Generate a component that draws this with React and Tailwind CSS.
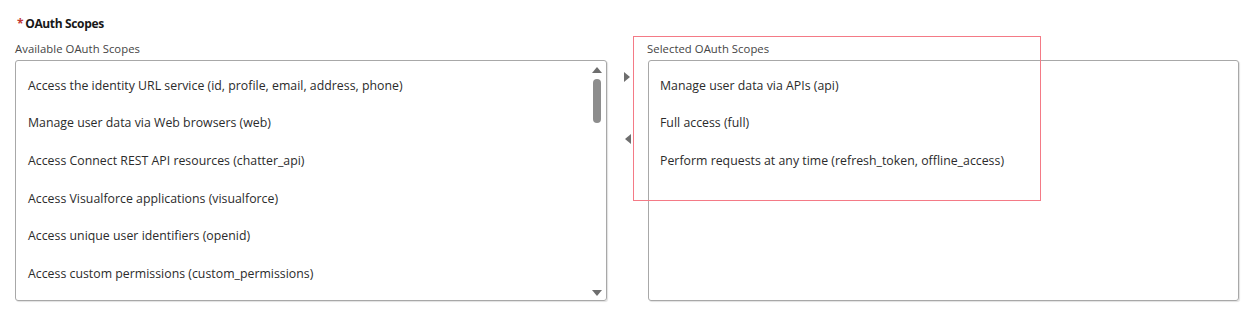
const available = [
  'Access the identity URL service (id, profile, email, address, phone)',
  'Manage user data via Web browsers (web)',
  'Access Connect REST API resources (chatter_api)',
  'Access Visualforce applications (visualforce)',
  'Access unique user identifiers (openid)',
  'Access custom permissions (custom_permissions)',
];

const selected = [
  'Manage user data via APIs (api)',
  'Full access (full)',
  'Perform requests at any time (refresh_token, offline_access)',
];

const font = { fontFamily: '"Open Sans", "Noto Sans", sans-serif' };

function Item({ text }) {
  return <div className="h-[37.7px] flex items-center text-[12.3px] text-[#2b2b2b] tracking-[0.02px]">{text}</div>;
}

export default function App() {
  return (
    <div className="relative w-[1242px] h-[312px] bg-white overflow-hidden" style={font}>
      <div className="pl-[15px] pt-[15px]">
        <div className="h-[18px] flex items-center text-[12px] font-bold text-[#181818] tracking-[-0.35px]">
          <span className="text-[#c23934] mr-[2px] ml-[2px]">*</span>OAuth Scopes
        </div>
        <div className="flex mt-[8px]">
          <div className="w-[592px]">
            <div className="h-[16px] text-[11.3px] text-[#444] tracking-[0.05px] leading-[16px]">Available OAuth Scopes</div>
            <div className="mt-[3px] h-[241px] border border-[#a8a8a8] rounded-[3px] shadow-[1px_1px_1px_rgba(0,0,0,0.12)] flex">
              <div className="flex-1 pl-[12px] pt-[6px]">
                {available.map((t) => <Item key={t} text={t} />)}
              </div>
              <div className="w-[16px] flex flex-col items-center pt-[6px] pb-[4px] pr-[2px]">
                <div className="w-0 h-0 border-l-[5px] border-r-[5px] border-b-[6px] border-l-transparent border-r-transparent border-b-[#6e6e6e]" />
                <div className="mt-[6px] w-[8px] h-[44px] rounded-full bg-[#8d8d8d]" />
                <div className="flex-1" />
                <div className="w-0 h-0 border-l-[5px] border-r-[5px] border-t-[6px] border-l-transparent border-r-transparent border-t-[#6e6e6e]" />
              </div>
            </div>
          </div>
          <div className="w-[41px] pt-[30px] flex flex-col items-center">
            <div className="mt-[1px] w-0 h-0 border-t-[5px] border-b-[5px] border-l-[6px] border-t-transparent border-b-transparent border-l-[#6e6e6e] -ml-[2px]" />
            <div className="mt-[52px] w-0 h-0 border-t-[5px] border-b-[5px] border-r-[6px] border-t-transparent border-b-transparent border-r-[#6e6e6e]" />
          </div>
          <div className="w-[591px]">
            <div className="h-[16px] text-[11.3px] text-[#444] tracking-[0.05px] leading-[16px] -ml-[1px]">Selected OAuth Scopes</div>
            <div className="mt-[3px] h-[241px] border border-[#a8a8a8] rounded-[3px] shadow-[1px_1px_1px_rgba(0,0,0,0.12)] pl-[11px] pt-[6px]">
              {selected.map((t) => <Item key={t} text={t} />)}
            </div>
          </div>
        </div>
      </div>
      <div className="absolute left-[633px] top-[36px] w-[408px] h-[165px] border-[1.5px] border-[#f47a86]" />
    </div>
  );
}
